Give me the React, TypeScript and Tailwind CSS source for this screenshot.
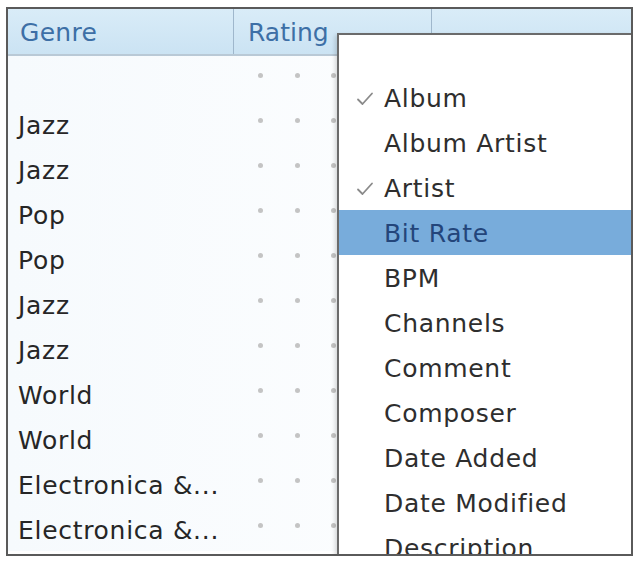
import React from "react";

const genres = ["", "Jazz", "Jazz", "Pop", "Pop", "Jazz", "Jazz", "World", "World", "Electronica &...", "Electronica &..."];

const items: { label: string; checked?: boolean; active?: boolean }[] = [
  { label: "Album", checked: true },
  { label: "Album Artist" },
  { label: "Artist", checked: true },
  { label: "Bit Rate", active: true },
  { label: "BPM" },
  { label: "Channels" },
  { label: "Comment" },
  { label: "Composer" },
  { label: "Date Added" },
  { label: "Date Modified" },
  { label: "Description" },
];

function Check() {
  return (
    <svg width="18" height="16" viewBox="0 0 18 16" className="absolute left-[17px] top-[16px]">
      <path d="M2 8.5 L6.5 13 L16 2.5" fill="none" stroke="#8a8a8a" strokeWidth="1.8" strokeLinecap="round" strokeLinejoin="round" />
    </svg>
  );
}

export default function App() {
  return (
    <div className="w-[637px] h-[564px] bg-white pt-[7px] pl-[6px]" style={{ fontFamily: '"DejaVu Sans", "Open Sans", sans-serif' }}>
      <div className="relative w-[627px] h-[549px] border-2 border-[#5a5a5a] overflow-hidden bg-white">
        <div className="flex h-[47px] bg-gradient-to-b from-[#d9ecf8] to-[#cbe3f3] border-b-2 border-[#b9c9d6] text-[25px] text-[#3d6fa6]">
          <div className="w-[226px] pl-[12px] pt-[2px] flex items-center border-r border-[#9fb7cc] tracking-[0.3px]">Genre</div>
          <div className="w-[198px] pl-[14px] pt-[2px] flex items-center border-r border-[#9fb7cc]">Rating</div>
          <div className="flex-1" />
        </div>
        {genres.map((g, i) => (
          <div key={i} className="flex h-[45px] text-[25px] text-[#262626] bg-gradient-to-r from-[#f6fafd] to-white">
            <div className="w-[226px] pl-[10px] pt-[4px] flex items-center whitespace-nowrap tracking-[0.7px]">{g}</div>
            <div className="w-[198px] relative">
              {[24, 61, 97].map((x) => (
                <span key={x} className="absolute top-[17px] w-[5px] h-[5px] rounded-full bg-[#c4c4c4]" style={{ left: x }} />
              ))}
            </div>
          </div>
        ))}
        <div className="absolute left-[329px] top-[24px] right-0 h-[560px] bg-white border-l-2 border-t-2 border-[#6b6b6b] shadow-[-2px_2px_4px_rgba(0,0,0,0.15)] pt-[40px] text-[25px] text-[#2e2e2e]">
          {items.map((it) => (
            <div
              key={it.label}
              className={
                "relative h-[45px] flex items-center pl-[45px] pt-[2px] whitespace-nowrap tracking-[0.7px] " +
                (it.active ? "bg-[#78acdb] text-[#23457a]" : "")
              }
            >
              {it.checked && <Check />}
              {it.label}
            </div>
          ))}
        </div>
      </div>
    </div>
  );
}
